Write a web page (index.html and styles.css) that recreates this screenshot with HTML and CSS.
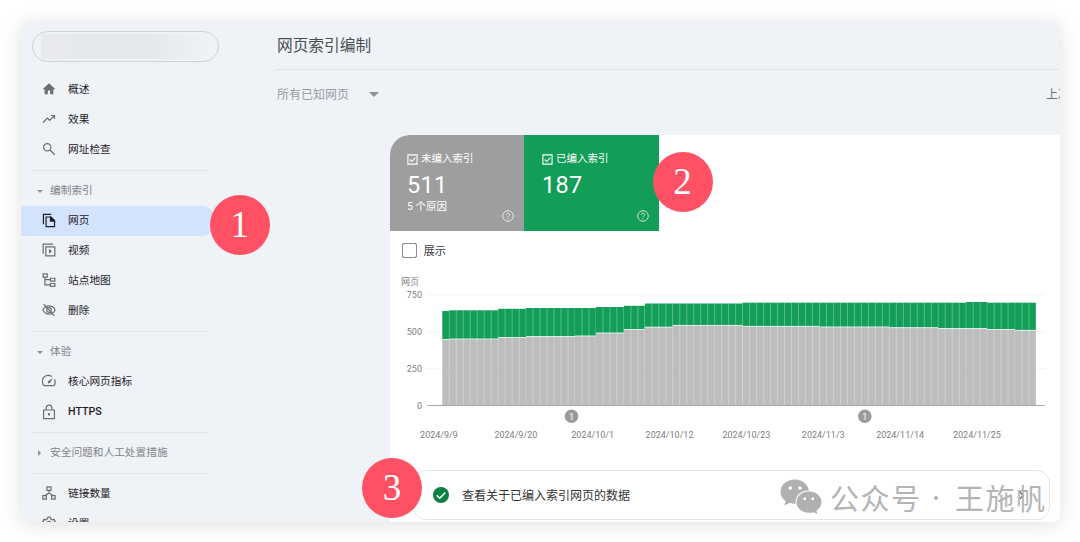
FILE: index.html
```html
<!DOCTYPE html>
<html lang="zh-CN">
<head>
  <meta charset="UTF-8">
  <meta name="viewport" content="width=device-width, initial-scale=1.0">
  <title>网页索引编制</title>
  <link rel="stylesheet" href="styles.css">
</head>
<body>
  <div class="window">
    <aside class="sidebar">
      <div class="property"><span class="property-name"></span></div>
      <nav>
        <a class="item"><svg viewBox="0 0 24 24"><path fill="currentColor" stroke="none" d="M10 21v-6.500h4V21h5.500v-8.500H23L12 2 1 12.500h3.500V21z"/></svg>概述</a>
        <a class="item"><svg viewBox="0 0 24 24"><path d="M2 18l7-7.500 4 4 8-8M15.500 6H21.500v6"/></svg>效果</a>
        <a class="item"><svg viewBox="0 0 24 24"><circle cx="9" cy="9" r="6.300"/><path d="M13.800 13.800l8 8"/></svg>网址检查</a>
        <hr>
        <div class="group"><i class="arrow down"></i><span>编制索引</span></div>
        <a class="item active"><svg viewBox="0 0 24 24"><path d="M2.500 18.500V1.500H16"/><path d="M7 6h8.500l6 6v10.500H7z"/><path fill="currentColor" d="M14.500 6.500V13H21z"/></svg>网页</a>
        <a class="item"><svg viewBox="0 0 24 24"><path d="M2 18.500V2h17"/><path d="M6.500 6.500h15.500V22H6.500z"/><path fill="currentColor" stroke="none" d="M12 10v8.500l5-4.200z"/></svg>视频</a>
        <a class="item"><svg viewBox="0 0 24 24"><path d="M2 1.500h7v5.500H2zM14.500 9h7.500v5h-7.500zM14.500 18h7.500v5h-7.500zM5 7v13.500h9.500M5 11.500h9.500"/></svg>站点地图</a>
        <a class="item"><svg viewBox="0 0 24 24"><path d="M1.500 12C4 7 8 5 12 5s8 2 10.500 7C20 17 16 19 12 19S4 17 1.500 12z"/><circle cx="12" cy="12" r="4"/><path d="M3 2l18 20"/></svg>删除</a>
        <hr>
        <div class="group"><i class="arrow down"></i><span>体验</span></div>
        <a class="item"><svg viewBox="0 0 24 24"><path d="M17 4.500A10.300 10.300 0 0 0 3.500 20h17a10.300 10.300 0 0 0 .8-11"/><path fill="currentColor" d="M19 7l-8.500 5.500a2 2 0 1 0 3 3z" stroke="none"/></svg>核心网页指标</a>
        <a class="item latin"><svg class="lock" viewBox="0 0 24 28"><path d="M2.500 10.500h19v15h-19zM7 10.500V7a5 5 0 0 1 10 0v3.500"/><circle cx="12" cy="18" r="1" fill="currentColor"/></svg>HTTPS</a>
        <hr>
        <div class="group"><i class="arrow right"></i><span>安全问题和人工处置措施</span></div>
        <hr>
        <a class="item"><svg viewBox="0 0 24 24"><path d="M8.500 1.500h7v6h-7zM1.500 16.500h6v6h-6zM16.500 16.500h6v6h-6zM12 7.500V12M5 16.500L12 12l7 4.500"/></svg>链接数量</a>
        <a class="item"><svg viewBox="0 0 24 24"><path d="M10 2h4l.8 3 2.700 1.500 3-.8 2 3.500-2.200 2.300v2l2.200 2.300-2 3.500-3-.8-2.700 1.500-.8 3h-4l-.8-3-2.700-1.500-3 .8-2-3.500 2.200-2.300v-2L1.500 9.200l2-3.500 3 .8L9.200 5z"/><circle cx="12" cy="12" r="3"/></svg>设置</a>
      </nav>
    </aside>

    <main>
      <h1>网页索引编制</h1>
      <div class="filter-bar">
        <span class="filter">所有已知网页<i class="arrow big"></i></span>
        <span class="updated">上次</span>
      </div>

      <section class="panel">
        <div class="tiles">
          <div class="tile gray">
            <div class="tile-label"><svg viewBox="0 0 12 12"><path d="M1 1h10v10H1zM3 6l2.200 2.200L9.200 4"/></svg><span>未编入索引</span></div>
            <div class="tile-value">511</div>
            <div class="tile-note">5 个原因</div>
            <svg class="help" viewBox="0 0 12 12"><circle cx="6" cy="6" r="5.300"/><path d="M4.400 4.900a1.600 1.600 0 1 1 2.500 1.200Q6 6.600 6 7.400M6 8.300v1"/></svg>
          </div>
          <div class="tile green">
            <div class="tile-label"><svg viewBox="0 0 12 12"><path d="M1 1h10v10H1zM3 6l2.200 2.200L9.200 4"/></svg><span>已编入索引</span></div>
            <div class="tile-value">187</div>
            <svg class="help" viewBox="0 0 12 12"><circle cx="6" cy="6" r="5.300"/><path d="M4.400 4.900a1.600 1.600 0 1 1 2.500 1.200Q6 6.600 6 7.400M6 8.300v1"/></svg>
          </div>
        </div>
        <div class="toggle"><span class="box"></span>展示</div>
        <svg class="chart" id="chart" width="670" height="176" viewBox="390 270 670 176"></svg>
        <div class="data-link">
          <svg class="ok" viewBox="0 0 16 16"><circle cx="8" cy="8" r="8"/><path d="M3.700 8.200l3 3 5.600-5.600"/></svg>
          <span>查看关于已编入索引网页的数据</span>
          <svg class="chevron" viewBox="0 0 6 10"><path d="M1 1l4 4-4 4"/></svg>
        </div>
      </section>
    </main>
  </div>

  <span class="step step-1">1</span>
  <span class="step step-2">2</span>
  <span class="step step-3">3</span>

  <div class="watermark">
    <svg viewBox="0 0 42 35">
      <path d="M15 .5C7 .5.5 5.800.5 12.800c0 4 2 7.200 5.200 9.400L4.500 26.500l5-2.500c2 .6 3.500.8 6 .8C15 17 20 11.800 29 11.500 27.500 5 22 .5 15 .5z"/>
      <path d="M29 12.500c-7 0-12.500 4.700-12.500 10.700S22 33.800 29 33.800c1.600 0 3-.2 4.300-.6l4.200 2-1.100-3.600c3.100-2 5.100-5 5.100-8.400 0-6-5.500-10.700-12.500-10.700z"/>
      <g class="eyes"><circle cx="10.300" cy="9" r="1.800"/><circle cx="20" cy="9" r="1.800"/><circle cx="24.800" cy="19.800" r="1.500"/><circle cx="32.800" cy="19.800" r="1.500"/></g>
    </svg>
    <span>公众号</span><i class="dot"></i><span>王施帆</span>
  </div>
  <script src="script.js"></script>
</body>
</html>
```

FILE: styles.css
```css
/* Base */
*, *::before, *::after { box-sizing: border-box; margin: 0; padding: 0; }
body { position: relative; width: 1080px; height: 542px; padding: 21px 20px 20px 21px; overflow: hidden; background: #fff; font-family: Roboto, "Noto Sans CJK SC", sans-serif; color: #3c4043; }
svg { display: block; flex: none; fill: none; stroke: currentColor; }

.window { display: flex; width: 1039px; height: 501px; overflow: hidden; border-radius: 7px; background: #eff3f8; box-shadow: 0 3px 20px rgba(0,0,0,0.12); }

/* Sidebar */
.sidebar { flex: none; width: 254px; padding-top: 10px; }
.property { width: 187px; height: 31px; margin: 0 0 13px 11px; padding: 2px 8px; border: 1px solid #cdd0d4; border-radius: 16px; }
.property-name { display: block; height: 25px; background: linear-gradient(90deg, #e9eaec, #e5e8ec 35%, #e5e8ec 65%, #eff3f8); }
.item { display: flex; align-items: center; gap: 12.5px; height: 30px; padding: 0 0 3px 20.5px; font-size: 10.7px; color: #1f2124; }
.item svg { width: 14px; height: 14px; margin-top: 1px; color: #6b6e72; stroke-width: 2.1; }
.item .lock { height: 16px; margin-top: 0; }
.item.latin { padding-bottom: 1px; font-weight: 500; }
.item.active { width: 195px; background: #d3e3fd; border-radius: 0 15px 15px 0; }
.item.active svg { height: 15px; color: #202124; }
hr { width: 177px; margin: 5px 0 5px 11px; border: 0; border-top: 1px solid #e0e4e7; }
.group { display: flex; align-items: center; height: 30px; padding-left: 16px; font-size: 10.7px; color: #808386; }
.group span { padding-bottom: 3px; }
.arrow { flex: none; width: 6px; margin-right: 7px; }
.arrow.down { border: 3px solid transparent; border-top-color: #909396; border-bottom: 0; }
.arrow.right { width: 3px; margin: 0 9px 0 1px; border: 3px solid transparent; border-left-color: #909396; border-right: 0; }
.arrow.big { width: 10px; margin: 2px 0 0 20px; border: 5px solid transparent; border-top-color: #8d9094; border-bottom: 0; }

/* Main column */
main { display: flex; flex-direction: column; flex: 1; min-width: 0; }
h1 { height: 49px; padding-left: 2px; border-bottom: 1px solid #e0e4e7; font-size: 15.7px; font-weight: 400; line-height: 50px; color: #4a4d50; }
.filter-bar { display: flex; justify-content: space-between; align-items: center; height: 65px; padding: 0 0 19px 2px; font-size: 12px; color: #999c9f; }
.filter { display: flex; align-items: center; }
.updated { margin-right: -10px; color: #707376; white-space: nowrap; }

/* White panel */
.panel { flex: 1; margin-left: 115px; overflow: hidden; border-top-left-radius: 20px; background: #fff; }
.tiles { display: flex; height: 96px; }
.tile { position: relative; padding: 16px 0 0 17px; color: #fff; }
.tile.gray { width: 134px; background: #9e9e9e; }
.tile.green { width: 135px; padding-left: 18px; background: #129d58; }
.tile-label { display: flex; align-items: center; gap: 3px; height: 16px; font-size: 10.5px; }
.tile-label span { padding-bottom: 3px; }
.tile-label svg { width: 11px; height: 11px; stroke-width: 1.2; }
.tile-value { height: 32px; padding-top: 4px; font-size: 23.5px; line-height: 28px; letter-spacing: 0.3px; }
.tile-note { height: 15px; font-size: 10.5px; line-height: 15px; }
.help { position: absolute; right: 10px; bottom: 9px; width: 12px; height: 12px; opacity: 0.75; }
.toggle { display: flex; align-items: center; gap: 7px; height: 39px; padding: 0 0 1px 11.5px; font-size: 11.3px; }
.box { width: 15px; height: 15px; border: 1.5px solid #6f7276; border-radius: 2px; outline: 0.5px solid #8b8e91; outline-offset: -1.5px; }

/* Chart */
.chart text { fill: #808080; stroke: none; font-size: 9px; }
.chart .grid { stroke: #f3f3f3; }
.chart .base { stroke: #a8a8a8; }
.chart .bar-in { fill: #129d58; stroke: none; }
.chart .bar-out { fill: #bdbdbd; stroke: none; }
.chart .cap { stroke: #d9f0e4; }
.chart .gap { stroke: rgba(255,255,255,0.3); }
.chart .pin { fill: #9b9b9b; stroke: none; }
.chart .pin-text { fill: #fff; }

.data-link { display: flex; align-items: center; width: 637px; height: 50px; margin: 24px 0 0 23px; padding: 0 25px 0 19px; border: 1px solid #e4e4e4; border-radius: 13px; font-size: 12px; color: #333; }
.data-link span { padding-bottom: 2px; }
.ok { width: 16px; height: 16px; margin-right: 13px; stroke: #fff; stroke-width: 1.6; }
.ok circle { fill: #0b8043; stroke: none; }
.chevron { width: 5px; height: 9px; margin-left: auto; stroke: #555; stroke-width: 1.5; }

/* Numbered markers over the window */
.step { position: absolute; width: 60px; height: 60px; border-radius: 50%; background: #ff5163; color: #fff; font: 37px/60px "Liberation Serif", serif; text-align: center; }
.step-1 { left: 209.7px; top: 195px; }
.step-2 { left: 652.5px; top: 152px; }
.step-3 { left: 362px; top: 458px; }

.watermark { position: absolute; left: 780px; top: 480px; display: flex; height: 35px; color: #b4b4b4; font: 29px/34px "Noto Sans CJK SC", sans-serif; letter-spacing: 1.5px; white-space: nowrap; }
.watermark svg { width: 42px; height: 35px; margin: -1px 8px 0 0; fill: #b0b0b0; stroke: none; }
.watermark .eyes { fill: #fff; }
.watermark .dot { width: 4px; height: 4px; margin: 16px 17px 0 12.5px; border-radius: 50%; background: #b4b4b4; }
```

FILE: script.js
```js
// [number of days, top of the indexed bar, top of the not indexed bar]
const runs = [
  [1, 311, 339.5], [7, 310.3, 339], [4, 308.8, 337.5], [7, 308, 336.5],
  [3, 308, 336], [4, 307, 333], [3, 305.8, 329.5], [4, 303.5, 327.2],
  [10, 303.5, 325.4], [11, 302.7, 326.4], [10, 302.7, 327], [7, 302.7, 327.7],
  [4, 302.7, 328.5], [3, 302, 328.5], [4, 302.7, 329.5], [3, 302.7, 330.4]
];
const dates = ['2024/9/9', '2024/9/20', '2024/10/1', '2024/10/12', '2024/10/23', '2024/11/3', '2024/11/14', '2024/11/25'];
const base = 405.5;
const left = 442.3;
const step = 6.985;

const line = (cls, x1, y1, x2, y2) => `<line class="${cls}" x1="${x1}" y1="${y1}" x2="${x2}" y2="${y2}"/>`;
let out = '<text x="401" y="285">网页</text>';

[[750, 295], [500, 332], [250, 368.7], [0, 405.5]].forEach(([value, y]) => {
  out += line('grid', 427, y, 1045, y);
  out += `<text x="422" y="${y + 3}" text-anchor="end">${value}</text>`;
});

let day = 0;
runs.forEach(([count, top, mid]) => {
  const x = left + day * step;
  const w = count * step;
  out += `<rect class="bar-in" x="${x}" y="${top}" width="${w}" height="${mid - top}"/>`;
  out += `<rect class="bar-out" x="${x}" y="${mid}" width="${w}" height="${base - mid}"/>`;
  out += line('cap', x, mid, x + w, mid);
  for (let i = 1; i <= count; i++) {
    out += line('gap', x + i * step, top, x + i * step, base);
  }
  day += count;
});
out += line('base', 427, base, 1045, base);

dates.forEach((date, i) => {
  out += `<text x="${439 + i * 76.85}" y="438" text-anchor="middle">${date}</text>`;
});
[571.5, 864.8].forEach(x => {
  out += `<circle class="pin" cx="${x}" cy="416.3" r="6.8"/><text class="pin-text" x="${x}" y="419.5" text-anchor="middle">1</text>`;
});
document.getElementById('chart').innerHTML = out;
```
